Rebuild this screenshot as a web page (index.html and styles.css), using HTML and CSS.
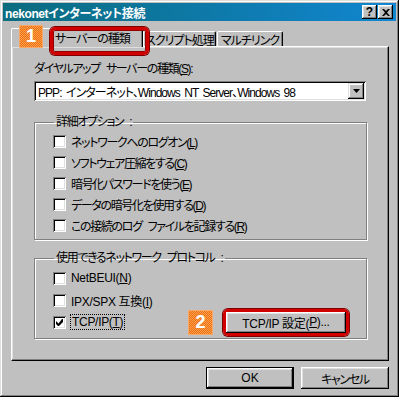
FILE: index.html
```html
<!DOCTYPE html>
<html lang="ja">
<head>
  <meta charset="utf-8">
  <title>nekonetインターネット接続</title>
  <link rel="stylesheet" href="styles.css">
</head>
<body>
  <div class="window">
    <div class="titlebar">
      <span class="title">nekonetインターネット接続</span>
      <div class="title-btns">
        <span class="tbtn help">?</span>
        <span class="tbtn close">
          <svg width="8" height="7" viewBox="0 0 8 7"><path d="M0 0h2l2 2l2-2h2l-3 3.5l3 3.5h-2l-2-2l-2 2h-2l3-3.5z"/></svg>
        </span>
      </div>
    </div>

    <div class="content">
      <div class="tabs">
        <div class="tab active">
          <span class="badge">1</span>
          <span class="tab-label">サーバーの種類</span>
        </div>
        <div class="tab t2"><span class="tab-label">スクリプト処理</span></div>
        <div class="tab t3"><span class="tab-label">マルチリンク</span></div>
      </div>

      <div class="panel">
        <div class="field-label jp">ダイヤルアップ サーバーの種類(<u>S</u>):</div>
        <div class="select">
          <span class="select-value">PPP: インターネット、Windows NT Server、Windows 98</span>
          <span class="drop">
            <svg width="7" height="4" viewBox="0 0 7 4"><path d="M0 0h7l-3.5 4z"/></svg>
          </span>
        </div>

        <fieldset class="group opts">
          <legend class="jp">詳細オプション :</legend>
          <label class="row"><span class="check"></span><span class="jp">ネットワークへのログオン(<u>L</u>)</span></label>
          <label class="row"><span class="check"></span><span class="jp">ソフトウェア圧縮をする(<u>C</u>)</span></label>
          <label class="row"><span class="check"></span><span class="jp">暗号化パスワードを使う(<u>E</u>)</span></label>
          <label class="row"><span class="check"></span><span class="jp">データの暗号化を使用する(<u>D</u>)</span></label>
          <label class="row"><span class="check"></span><span class="jp">この接続のログ ファイルを記録する(<u>R</u>)</span></label>
        </fieldset>

        <fieldset class="group protos">
          <legend class="jp">使用できるネットワーク プロトコル :</legend>
          <label class="row"><span class="check"></span><span class="en">NetBEUI(<u>N</u>)</span></label>
          <label class="row"><span class="check"></span><span class="en">IPX/SPX 互換(<u>I</u>)</span></label>
          <div class="row">
            <span class="check on">
              <svg width="7" height="7" viewBox="0 0 7 7"><path d="M6 0h1v3l-4 4h-1l-2-2v-3l2.5 2.5z"/></svg>
            </span>
            <span class="focus en">TCP/IP(<u>T</u>)</span>
            <span class="spacer"></span>
            <span class="badge small">2</span>
            <span class="btn-ring"><span class="btn wide en">TCP/IP 設定(<u>P</u>)...</span></span>
          </div>
        </fieldset>
      </div>

      <div class="actions">
        <span class="btn default">OK</span>
        <span class="btn jp">キャンセル</span>
      </div>
    </div>
  </div>
</body>
</html>
```

FILE: styles.css
```css
* {
  box-sizing: border-box;
}

html, body {
  margin: 0;
}

body {
  width: 399px;
  height: 397px;
  background: #c0c0c0;
  color: #000;
  font: 12px "Liberation Sans", "Noto Sans CJK JP", sans-serif;
  font-feature-settings: "palt";
  white-space: nowrap;
  overflow: hidden;
}

.jp {
  letter-spacing: -1.35px;
  word-spacing: 4px;
}

.en {
  letter-spacing: -0.3px;
}

.window {
  width: 399px;
  height: 397px;
  padding: 3px;
  display: flex;
  flex-direction: column;
  box-shadow: inset -1px -1px #000, inset 1px 1px #dfdfdf, inset -2px -2px #808080, inset 2px 2px #fff;
}

/* title bar */
.titlebar {
  height: 18px;
  display: flex;
  align-items: center;
  justify-content: space-between;
  padding: 0 3px 0 2px;
  background: linear-gradient(to right, #0b6c7e, #1186d0);
  color: #fff;
  font-weight: bold;
}

.title {
  letter-spacing: -0.4px;
}

.title-btns {
  display: flex;
  gap: 1px;
}

.tbtn {
  width: 15px;
  height: 14px;
  display: flex;
  align-items: center;
  justify-content: center;
  background: #c0c0c0;
  color: #000;
  font: bold 12px "Liberation Sans", sans-serif;
  box-shadow: inset -1px -1px #000, inset 1px 1px #fff, inset -2px -2px #808080, inset 2px 2px #dfdfdf;
}

.tbtn svg {
  fill: #000;
}

/* tabs */
.content {
  flex: 1;
  display: flex;
  flex-direction: column;
  padding: 7px 7px 0 8px;
}

.tabs {
  display: flex;
  align-items: flex-end;
  height: 19px;
  position: relative;
  z-index: 1;
  margin-bottom: -1px;
}

.tab {
  height: 15px;
  margin-bottom: 1px;
  display: flex;
  align-items: center;
  justify-content: center;
  background: #c0c0c0;
  border-top: 1px solid #fff;
  border-left: 1px solid #fff;
  border-right: 1px solid #000;
  border-radius: 2px 2px 0 0;
  box-shadow: inset -1px 0 #808080;
}

.tab-label {
  letter-spacing: -1px;
}

.tab.active {
  width: 132px;
  height: 19px;
  margin-bottom: 0;
  justify-content: flex-start;
  padding: 0 0 2px 43px;
  position: relative;
}

.tab.active::after {
  content: "";
  position: absolute;
  left: 38px;
  top: -2px;
  width: 93px;
  height: 22px;
  border: 3px solid #d00000;
  border-radius: 5px;
  box-shadow: 0 0 0 1px #800000, inset 0 0 0 1px #900000;
}

.tab.t2 {
  width: 73px;
}

.tab.t3 {
  width: 66px;
  margin-left: 1px;
}

.badge {
  width: 24px;
  height: 23px;
  display: flex;
  align-items: center;
  justify-content: center;
  color: #fff;
  font: bold 18px "Liberation Sans", sans-serif;
  background: repeating-conic-gradient(#f07010 0 25%, #f8a050 0 50%) 0 0 / 2px 2px;
  border: 1px solid #f8a868;
}

.tab.active .badge {
  position: absolute;
  left: 7px;
  top: -4px;
}

/* panel */
.panel {
  height: 315px;
  display: flex;
  flex-direction: column;
  padding: 15px 22px 0 22px;
  border-top: 1px solid #fff;
  border-left: 1px solid #fff;
  border-right: 1px solid #000;
  border-bottom: 1px solid #000;
  box-shadow: inset -1px -1px #808080, inset 1px 1px #dfdfdf;
}

.field-label {
  line-height: 14px;
}

.select {
  margin-top: 5px;
  height: 20px;
  display: flex;
  align-items: center;
  justify-content: space-between;
  padding: 2px;
  background: #fff;
  box-shadow: inset 1px 1px #808080, inset -1px -1px #fff, inset 2px 2px #000, inset -2px -2px #dfdfdf;
}

.select-value {
  padding-left: 2px;
  letter-spacing: -0.95px;
  word-spacing: 2px;
}

.drop {
  width: 16px;
  height: 16px;
  display: flex;
  align-items: center;
  justify-content: center;
  background: #c0c0c0;
  box-shadow: inset -1px -1px #000, inset 1px 1px #dfdfdf, inset -2px -2px #808080, inset 2px 2px #fff;
}

/* group boxes */
.group {
  margin: 0;
  width: 333px;
  border: 1px solid #808080;
  box-shadow: inset 1px 1px #fff, 1px 1px #fff;
  padding: 2px 17px 3px 18px;
}

.group legend {
  padding: 0 2px;
  margin-left: 1px;
  line-height: 14px;
}

.opts {
  margin-top: 14px;
}

.protos {
  margin-top: 11px;
  padding-bottom: 5px;
}

.row {
  height: 21px;
  display: flex;
  align-items: center;
  gap: 5px;
}

.protos .row {
  height: 22px;
}

.check {
  width: 13px;
  height: 13px;
  flex: none;
  display: flex;
  align-items: center;
  justify-content: center;
  background: #fff;
  box-shadow: inset 1px 1px #808080, inset -1px -1px #fff, inset 2px 2px #000, inset -2px -2px #dfdfdf;
}

.check svg {
  fill: #000;
}

.focus {
  outline: 1px dotted #000;
  outline-offset: 0;
  padding: 0 1px;
  line-height: 14px;
}

.spacer {
  flex: 1;
}

.badge.small {
  width: 25px;
  height: 25px;
  margin-right: 5px;
}

.btn-ring {
  border: 3px solid #d00000;
  border-radius: 5px;
  box-shadow: 0 0 0 1px #800000, inset 0 0 0 1px #900000;
  display: flex;
}

/* buttons */
.btn {
  height: 22px;
  width: 88px;
  display: flex;
  align-items: center;
  justify-content: center;
  background: #c0c0c0;
  box-shadow: inset -1px -1px #000, inset 1px 1px #fff, inset -2px -2px #808080, inset 2px 2px #dfdfdf;
}

.btn.wide {
  width: 120px;
  height: 21px;
}

.btn.default {
  box-shadow: inset 0 0 0 1px #000, inset -2px -2px #000, inset 2px 2px #fff, inset -3px -3px #808080, inset 3px 3px #dfdfdf;
}

.actions {
  display: flex;
  justify-content: flex-end;
  gap: 7px;
  margin-top: 6px;
}
```
